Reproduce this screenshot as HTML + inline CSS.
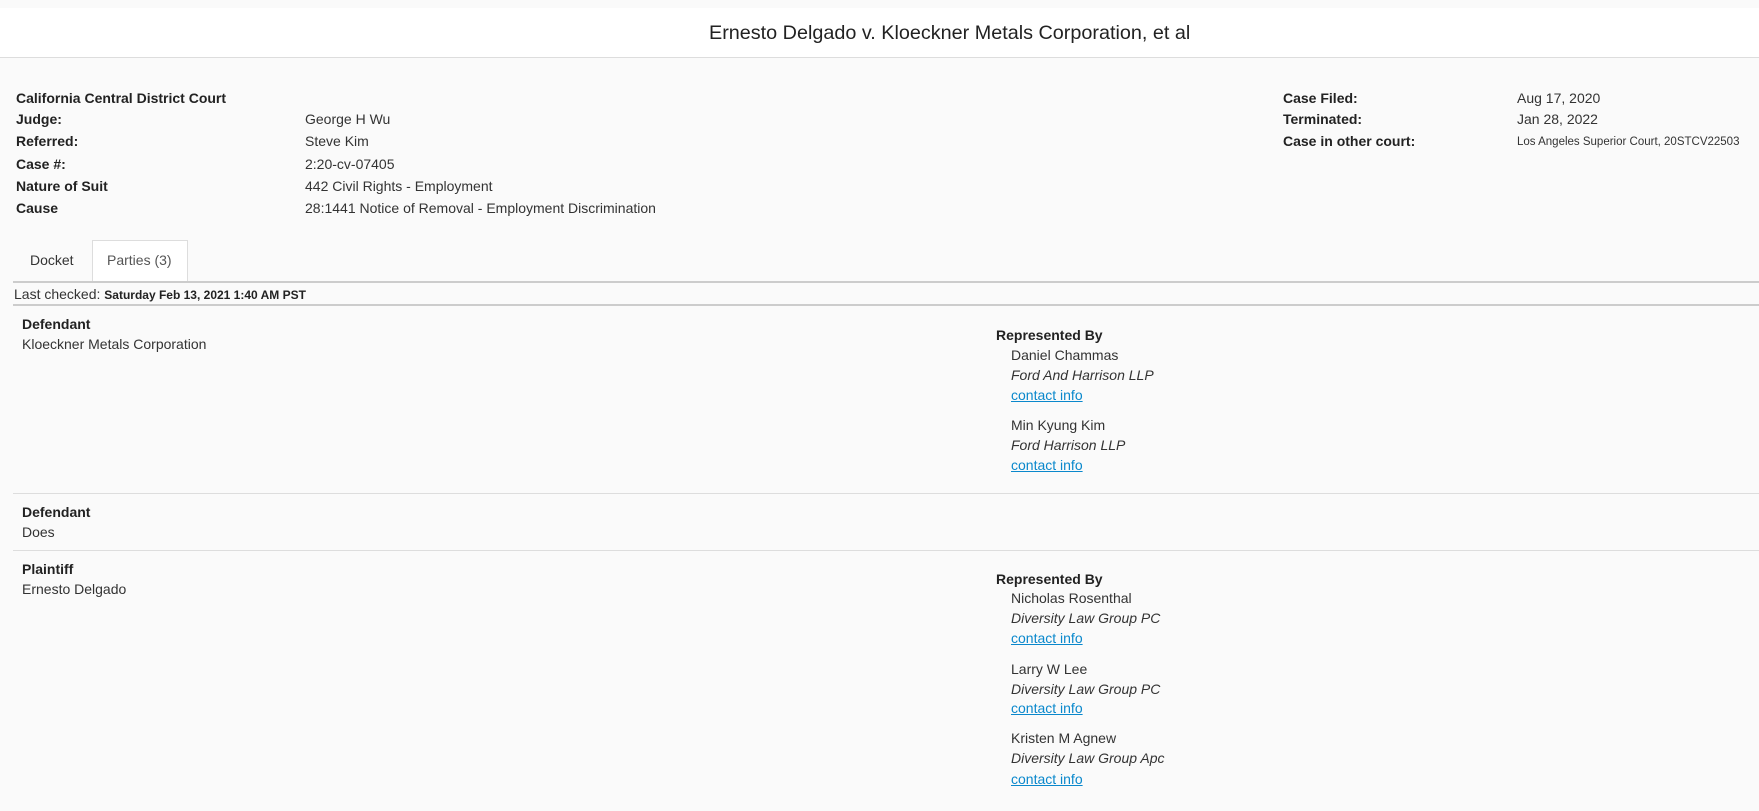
<!DOCTYPE html>
<html><head><meta charset="utf-8"><style>
html,body{margin:0;padding:0}
body{width:1759px;height:811px;background:#fafafa;font-family:"Liberation Sans",Arial,sans-serif;color:#333;font-size:14px;position:relative;overflow:hidden}
.a{position:absolute;white-space:nowrap;line-height:16px}
b{font-weight:bold;color:#222}
.top{position:absolute;left:0;top:8px;width:1759px;height:49px;background:#fff;border-bottom:1px solid #ddd}
.title{position:absolute;left:709px;top:14px;font-size:19.8px;color:#222;line-height:22px}
.hr{position:absolute;left:13px;right:0;height:1px;background:#ddd}
a{color:#0a88cc;text-decoration:underline}
i{font-style:italic}
</style></head><body>
<div class="top"><div class="title">Ernesto Delgado v. Kloeckner Metals Corporation, et al</div></div>

<div class="a" style="left:16px;top:90px"><b>California Central District Court</b></div>
<div class="a" style="left:16px;top:111px"><b>Judge:</b></div><div class="a" style="left:305px;top:111px">George H Wu</div>
<div class="a" style="left:16px;top:133px"><b>Referred:</b></div><div class="a" style="left:305px;top:133px">Steve Kim</div>
<div class="a" style="left:16px;top:156px"><b>Case #:</b></div><div class="a" style="left:305px;top:156px">2:20-cv-07405</div>
<div class="a" style="left:16px;top:178px"><b>Nature of Suit</b></div><div class="a" style="left:305px;top:178px">442 Civil Rights - Employment</div>
<div class="a" style="left:16px;top:200px"><b>Cause</b></div><div class="a" style="left:305px;top:200px">28:1441 Notice of Removal - Employment Discrimination</div>

<div class="a" style="left:1283px;top:90px"><b>Case Filed:</b></div><div class="a" style="left:1517px;top:90px">Aug 17, 2020</div>
<div class="a" style="left:1283px;top:111px"><b>Terminated:</b></div><div class="a" style="left:1517px;top:111px">Jan 28, 2022</div>
<div class="a" style="left:1283px;top:133px"><b>Case in other court:</b></div><div class="a" style="left:1517px;top:134px;font-size:11.5px">Los Angeles Superior Court, 20STCV22503</div>

<div style="position:absolute;left:92px;top:240px;width:94px;height:42px;background:#fff;border:1px solid #ddd;border-bottom:none"></div>
<div class="a" style="left:30px;top:252px">Docket</div>
<div class="a" style="left:107px;top:252px;color:#555">Parties (3)</div>
<div class="hr" style="top:281px;height:2px;background:#ccc"></div>
<div class="a" style="left:14px;top:286px">Last checked: <b style="font-size:12px">Saturday Feb 13, 2021 1:40 AM PST</b></div>
<div class="hr" style="top:304px;height:2px;background:#ccc"></div>

<div class="a" style="left:22px;top:316px"><b>Defendant</b></div>
<div class="a" style="left:22px;top:336px">Kloeckner Metals Corporation</div>
<div class="a" style="left:996px;top:327px"><b>Represented By</b></div>
<div class="a" style="left:1011px;top:347px">Daniel Chammas</div>
<div class="a" style="left:1011px;top:367px"><i>Ford And Harrison LLP</i></div>
<div class="a" style="left:1011px;top:387px"><a>contact info</a></div>
<div class="a" style="left:1011px;top:417px">Min Kyung Kim</div>
<div class="a" style="left:1011px;top:437px"><i>Ford Harrison LLP</i></div>
<div class="a" style="left:1011px;top:457px"><a>contact info</a></div>
<div class="hr" style="top:493px"></div>

<div class="a" style="left:22px;top:504px"><b>Defendant</b></div>
<div class="a" style="left:22px;top:524px">Does</div>
<div class="hr" style="top:550px"></div>

<div class="a" style="left:22px;top:561px"><b>Plaintiff</b></div>
<div class="a" style="left:22px;top:581px">Ernesto Delgado</div>
<div class="a" style="left:996px;top:571px"><b>Represented By</b></div>
<div class="a" style="left:1011px;top:590px">Nicholas Rosenthal</div>
<div class="a" style="left:1011px;top:610px"><i>Diversity Law Group PC</i></div>
<div class="a" style="left:1011px;top:630px"><a>contact info</a></div>
<div class="a" style="left:1011px;top:661px">Larry W Lee</div>
<div class="a" style="left:1011px;top:681px"><i>Diversity Law Group PC</i></div>
<div class="a" style="left:1011px;top:700px"><a>contact info</a></div>
<div class="a" style="left:1011px;top:730px">Kristen M Agnew</div>
<div class="a" style="left:1011px;top:750px"><i>Diversity Law Group Apc</i></div>
<div class="a" style="left:1011px;top:771px"><a>contact info</a></div>
</body></html>
